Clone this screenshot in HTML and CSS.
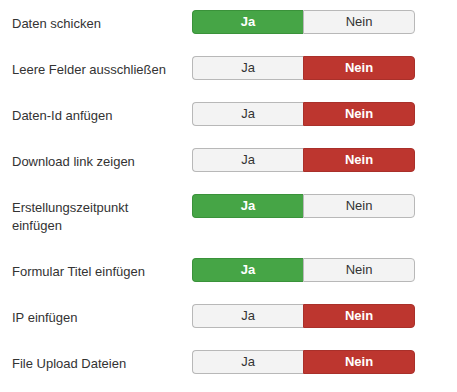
FILE: index.html
```html
<!DOCTYPE html>
<html lang="de">
<head>
<meta charset="utf-8">
<title>Optionen</title>
<link rel="stylesheet" href="styles.css">
</head>
<body>
<form class="form">
  <div class="row">
    <label class="label">Daten schicken</label>
    <div class="toggle"><span class="btn yes active">Ja</span><span class="btn no">Nein</span></div>
  </div>
  <div class="row">
    <label class="label">Leere Felder ausschließen</label>
    <div class="toggle"><span class="btn yes">Ja</span><span class="btn no active">Nein</span></div>
  </div>
  <div class="row">
    <label class="label">Daten-Id anfügen</label>
    <div class="toggle"><span class="btn yes">Ja</span><span class="btn no active">Nein</span></div>
  </div>
  <div class="row">
    <label class="label">Download link zeigen</label>
    <div class="toggle"><span class="btn yes">Ja</span><span class="btn no active">Nein</span></div>
  </div>
  <div class="row">
    <label class="label">Erstellungszeitpunkt<br>einfügen</label>
    <div class="toggle"><span class="btn yes active">Ja</span><span class="btn no">Nein</span></div>
  </div>
  <div class="row">
    <label class="label">Formular Titel einfügen</label>
    <div class="toggle"><span class="btn yes active">Ja</span><span class="btn no">Nein</span></div>
  </div>
  <div class="row">
    <label class="label">IP einfügen</label>
    <div class="toggle"><span class="btn yes">Ja</span><span class="btn no active">Nein</span></div>
  </div>
  <div class="row">
    <label class="label">File Upload Dateien</label>
    <div class="toggle"><span class="btn yes">Ja</span><span class="btn no active">Nein</span></div>
  </div>
</form>
</body>
</html>
```
FILE: styles.css
```css
html, body {
  margin: 0;
  padding: 0;
  background: #ffffff;
}
body {
  font-family: "Liberation Sans", Arial, sans-serif;
  font-size: 13px;
  line-height: 18px;
  color: #333333;
}
.form {
  padding: 10px 12px;
}
.row {
  display: flex;
  align-items: flex-start;
  margin-bottom: 22px;
}
.label {
  width: 172px;
  flex: 0 0 172px;
  padding: 5px 8px 1px 0;
  white-space: nowrap;
}
.toggle {
  display: flex;
  width: 223px;
  height: 24px;
}
.btn {
  flex: 1 1 0;
  box-sizing: border-box;
  height: 24px;
  line-height: 22px;
  text-align: center;
  background: #f3f3f3;
  border: 1px solid #b8b8b8;
  color: #333333;
}
.btn.yes {
  border-radius: 4px 0 0 4px;
  border-right: none;
}
.btn.no {
  border-radius: 0 4px 4px 0;
}
.btn.yes.active {
  background: #46a546;
  border-color: #3a923a;
  color: #ffffff;
  font-weight: bold;
}
.btn.no.active {
  background: #bd362f;
  border-color: #a9302a;
  color: #ffffff;
  font-weight: bold;
}
```
